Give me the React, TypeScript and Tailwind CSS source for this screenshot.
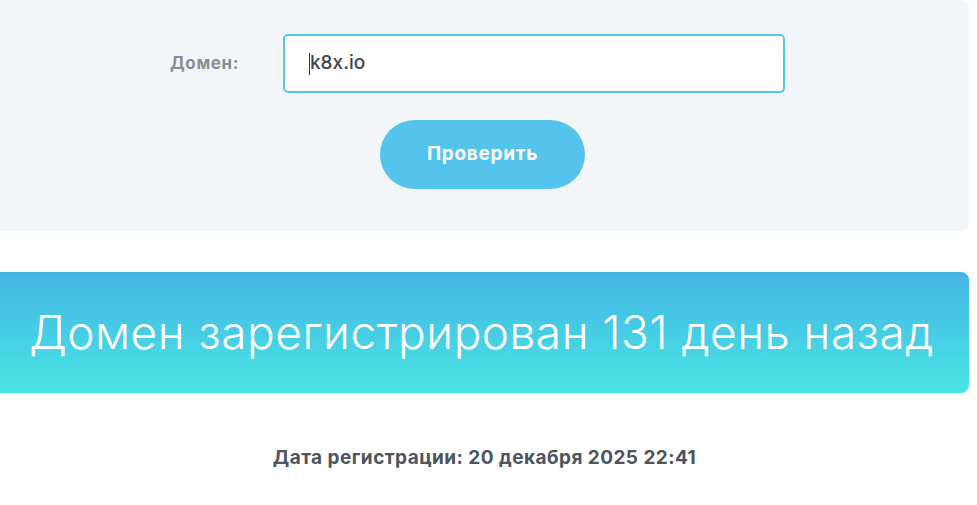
export default function App() {
  return (
    <div className="min-h-screen w-[977px] bg-white font-['Inter','Open_Sans',sans-serif]">
      {/* Форма проверки домена */}
      <section className="w-[969px] h-[231px] bg-[#f3f6f8] rounded-r-lg pt-[34px]">
        <div className="flex items-center pl-[170px]">
          <label className="w-[113px] text-[17px] font-bold tracking-[0.6px] text-[#8b8e90]">Домен:</label>
          <div className="w-[502px] h-[59px] bg-white border-2 border-[#56c5ec] rounded-[5px] flex items-center pl-[24px]">
            <span className="w-px h-[22px] bg-[#333]" />
            <span className="text-[19px] font-medium text-[#3f4550]">k8x.io</span>
          </div>
        </div>
        <button className="mt-[27px] ml-[380px] w-[205px] h-[69px] rounded-full bg-[#55c4ec] text-white text-[19px] font-bold tracking-[0.7px]">
          Проверить
        </button>
      </section>

      {/* Результат */}
      <div className="mt-[41px] w-[969px] h-[121px] rounded-r-lg bg-gradient-to-b from-[#45b5e4] to-[#48e5e4] flex items-center justify-center">
        <h1 className="text-white text-[46px] font-light tracking-[0.5px] -ml-[6px]">
          Домен зарегистрирован 131 день назад
        </h1>
      </div>

      <p className="mt-[53px] w-[969px] text-center text-[19px] font-bold tracking-[0.45px] text-[#4d5460] leading-6">
        Дата регистрации: 20 декабря 2025 22:41
      </p>
    </div>
  );
}
